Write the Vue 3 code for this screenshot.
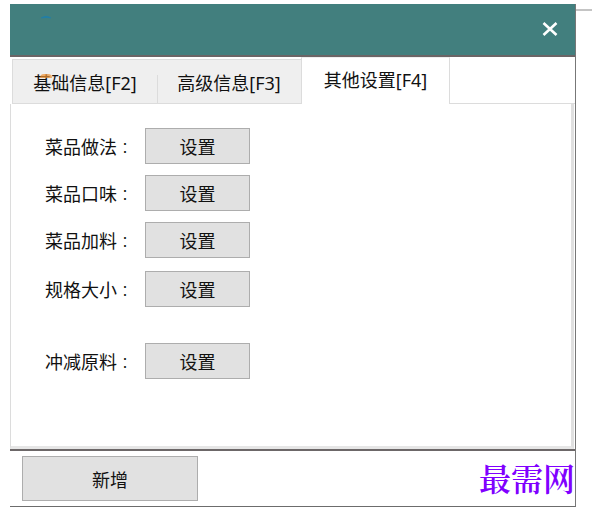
<template>
  <div class="page">
    <main class="dialog">
      <header class="title-bar">
        <svg class="logo" width="12" height="4" viewBox="0 0 12 4" aria-hidden="true">
          <path d="M1 3Q6 -0.5 11 3Q6 2 1 3Z" fill="#1c7fae" stroke="#1c7fae" stroke-width="0.5" />
        </svg>
        <button class="close-btn" type="button" aria-label="关闭">
          <svg width="16" height="14" viewBox="0 0 16 14" fill="none" stroke="#fff" stroke-width="2.6">
            <path d="M1.5 1L14.5 13M14.5 1L1.5 13" />
          </svg>
        </button>
      </header>

      <nav class="tabs" role="tablist">
        <button
          v-for="tab in tabs"
          :key="tab.key"
          type="button"
          role="tab"
          class="tab"
          :class="{ active: tab.key === activeTab }"
          :aria-selected="tab.key === activeTab"
          @click="activeTab = tab.key"
        >
          {{ tab.label }}
        </button>
        <span class="tabs-rest"></span>
      </nav>

      <section class="panel">
        <div v-for="row in rows" :key="row.id" class="row" :class="row.space">
          <label :for="row.id">{{ row.label }}<span class="colon">：</span></label>
          <button :id="row.id" class="btn btn-set" type="button">设置</button>
        </div>
      </section>

      <footer class="footer">
        <button class="btn btn-add" type="button">新增</button>
        <span class="site-mark">最需网</span>
      </footer>
    </main>
    <div class="side-line"></div>
  </div>
</template>

<script setup>
import { ref } from 'vue';

const activeTab = ref('F4');

const tabs = [
  { key: 'F2', label: '基础信息[F2]' },
  { key: 'F3', label: '高级信息[F3]' },
  { key: 'F4', label: '其他设置[F4]' }
];

const rows = [
  { id: 'cook', label: '菜品做法', space: '' },
  { id: 'taste', label: '菜品口味', space: '' },
  { id: 'extra', label: '菜品加料', space: '' },
  { id: 'size', label: '规格大小', space: 'space-small' },
  { id: 'material', label: '冲减原料', space: 'space-large' }
];
</script>

<style>
body {
  background: #fff;
}
</style>

<style scoped>
.page {
  display: flex;
  align-items: flex-start;
  padding: 4px 0 4px 10px;
  font-family: 'Noto Sans', 'Noto Sans CJK SC', sans-serif;
  font-size: 18px;
  line-height: 24px;
  color: #111;
}

.dialog {
  flex: 1;
  box-sizing: border-box;
  border-right: 1px solid #777;
  border-bottom: 1px solid #6c6c6c;
}

.side-line {
  width: 16px;
  height: 2px;
  margin-top: 5px;
  background: #c4c4c4;
}

button {
  margin: 0;
  padding: 0;
  font: inherit;
  color: inherit;
  cursor: pointer;
}

.title-bar {
  display: flex;
  align-items: flex-start;
  justify-content: space-between;
  height: 51px;
  padding: 0 16px 0 30px;
  background: #427f7e;
  border-bottom: 2px solid #6b6566;
}

.logo {
  margin-top: 11px;
}

.close-btn {
  display: flex;
  align-items: center;
  justify-content: center;
  width: 18px;
  height: 50px;
  background: transparent;
  border: none;
}

.tabs {
  display: flex;
  align-items: flex-end;
  height: 47px;
  padding-left: 2px;
}

.tab {
  position: relative;
  box-sizing: border-box;
  width: 145px;
  height: 45px;
  padding-top: 2px;
  background: #efefef;
  border: 1px solid #dcdcdc;
  border-right: none;
}

.tab + .tab {
  width: 144px;
  border-left: none;
}

/* short divider between the inactive tabs */
.tab + .tab:not(.active)::before {
  content: '';
  position: absolute;
  left: 0;
  bottom: 0;
  width: 1px;
  height: 28px;
  background: #dcdcdc;
}

/* orange mark over the first tab's text */
.tab:first-child::after {
  content: '';
  position: absolute;
  left: 27px;
  top: 14px;
  width: 12px;
  height: 4px;
  border-radius: 5px 5px 0 0;
  background: rgba(240, 145, 50, 0.7);
}

.tab.active {
  width: 149px;
  height: 47px;
  padding: 0 0 2px;
  background: #fff;
  border: 1px solid #dcdcdc;
  border-top-color: #eee;
  border-bottom: none;
}

.tabs-rest {
  flex: 1;
  border-bottom: 1px solid #dcdcdc;
}

.panel {
  display: flex;
  flex-direction: column;
  gap: 11px;
  margin-right: 1px;
  padding: 24px 34px 67px;
  border-left: 1px solid #dcdcdc;
  border-right: 3px solid #e0e0e0;
  border-bottom: 3px solid #e6e6e6;
}

.row {
  display: flex;
  align-items: center;
}

.row label {
  width: 100px;
  padding-top: 2px;
  white-space: nowrap;
}

.colon {
  font-family: 'Noto Sans CJK JP', sans-serif;
  font-size: 16px;
  font-weight: 300;
}

.space-small {
  margin-top: 2px;
}

.space-large {
  margin-top: 25px;
}

.btn {
  box-sizing: border-box;
  padding-top: 2px;
  background: #e1e1e1;
  border: 1px solid #adadad;
}

.btn-set {
  width: 105px;
  height: 36px;
}

.btn-add {
  width: 176px;
  height: 45px;
}

.footer {
  display: flex;
  align-items: flex-start;
  justify-content: space-between;
  padding: 5px 0 5px 12px;
  border-top: 2px solid #6c6768;
}

.site-mark {
  font-family: 'Noto Serif CJK SC', 'Noto Serif SC', 'Noto Sans CJK SC', serif;
  font-size: 32px;
  line-height: 42px;
  font-weight: 600;
  color: #8000ff;
}
</style>
